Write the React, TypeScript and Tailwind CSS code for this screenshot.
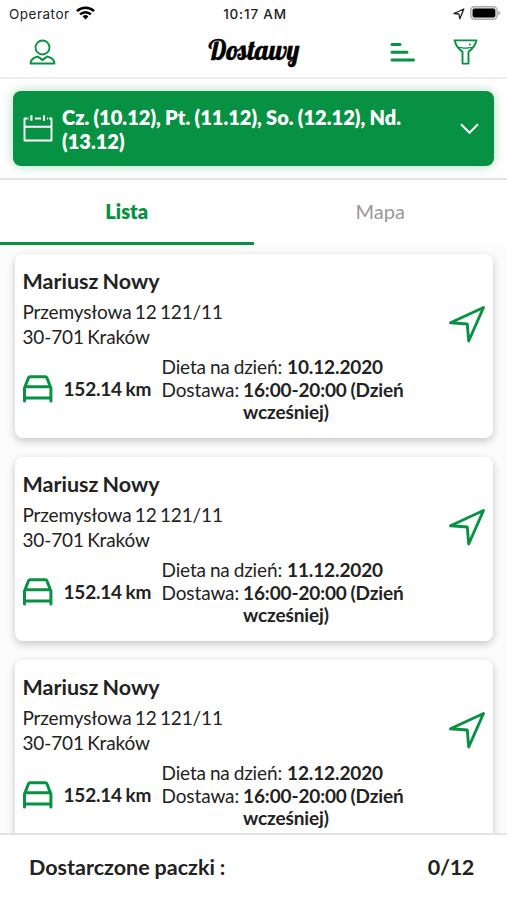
import { type ReactNode } from "react";

type Delivery = {
  id: number;
  name: string;
  street: string;
  city: string;
  distance: string;
  date: string;
};

const deliveries: Delivery[] = ["10.12.2020", "11.12.2020", "12.12.2020"].map((date, id) => ({
  id,
  name: "Mariusz Nowy",
  street: "Przemysłowa 12 121/11",
  city: "30-701 Kraków",
  distance: "152.14 km",
  date,
}));

function StatusBar() {
  return (
    <div className="grid h-7 shrink-0 grid-cols-[1fr_auto_1fr] items-center pr-1.5 pl-[9px] font-['Inter',sans-serif] text-[13.5px] text-[#222]">
      <div className="flex items-center gap-1.5">
        <span className="tracking-[0.5px]">Operator</span>
        <svg className="-mt-0.5" width="19" height="14" viewBox="0 0 19 14" fill="none" stroke="#000" strokeWidth="2.5">
          <path d="M1 5.1a12.3 12.3 0 0 1 17 0" />
          <path d="M4.1 8.4a7.8 7.8 0 0 1 10.8 0" />
          <path d="M9.5 13.4 6.6 10.5a4.2 4.2 0 0 1 5.8 0Z" fill="#000" stroke="none" />
        </svg>
      </div>
      <div className="text-center font-medium tracking-[0.8px]">10:17 AM</div>
      <div className="flex items-center justify-end gap-[5px]">
        <svg width="12" height="12" viewBox="0 0 12 12" fill="none" stroke="#222" strokeWidth="1.3" strokeLinejoin="round">
          <path d="M1 5.5 10.8 1 6.8 10.8 5.9 6Z" />
        </svg>
        <svg className="-mt-0.5" width="31" height="14" viewBox="0 0 31 14">
          <rect x="0.7" y="0.7" width="26.5" height="12.6" rx="3.6" fill="#ddd" stroke="#aaa" strokeWidth="1.2" />
          <rect x="2.6" y="2.6" width="22.7" height="8.8" rx="2" fill="#000" />
          <path d="M28.3 4.7c1.5.6 2 1.4 2 2.3s-.5 1.7-2 2.3Z" fill="#aaa" />
        </svg>
      </div>
    </div>
  );
}

function Header() {
  return (
    <header className="grid h-[51px] shrink-0 grid-cols-[1fr_auto_1fr] items-center border-b-2 border-[#eee] pr-7 pl-[29px]">
      <svg className="-mt-0.5" width="27" height="26" viewBox="0 0 27 26" fill="none" stroke="#079243" strokeWidth="1.8" strokeLinejoin="round">
        <circle cx="13.5" cy="8.5" r="7" />
        <path d="M8.8 17.5C4.5 18.5 1.8 20.8 1.5 24.5h24c-.3-3.7-3-6-7.3-7l-4.7 3.6Z" />
        <path d="m10 18.5 3.5 2.2 3.5-2.2" />
      </svg>
      <h1 className="-mt-1 text-center font-['Lobster','Liberation_Serif',serif] text-[27px] leading-none text-black [-webkit-text-stroke:0.4px_black]">
        Dostawy
      </h1>
      <div className="-mt-0.5 flex items-center justify-end gap-[37px]">
        <svg width="26" height="24" viewBox="0 0 26 24" fill="none" stroke="#079243" strokeWidth="3" strokeLinecap="round">
          <path d="M2 4.5h8M2 12.3h15M2 20h21.5" />
        </svg>
        <svg width="26" height="26" viewBox="0 0 26 26" fill="none" stroke="#079243" strokeWidth="1.9" strokeLinejoin="round">
          <path d="M.7 1.4h23.6M1.9 1.6c.4 4 3.4 8 7.6 11.2v11.8h6V12.8c4.2-3.2 7.2-7.2 7.6-11.2" />
          <path d="M5.3 8.7c2.5-.9 4.4.7 7.2.5 2.4-.1 4-.9 6.6-.5" strokeWidth="1.3" />
          <circle cx="16.8" cy="5.5" r="1" fill="#079243" stroke="none" />
        </svg>
      </div>
    </header>
  );
}

function DatePicker() {
  return (
    <div className="h-[101px] shrink-0 border-b-2 border-[#e4e4e4] px-[13px] pt-3">
      <button className="flex h-[75px] w-full items-center rounded-lg bg-[#079243] pr-[15px] pl-2.5 text-left text-white shadow-[0_0_12px_#07924355]">
        <svg className="shrink-0" width="30" height="28" viewBox="0 0 30 28" fill="none" stroke="currentColor" strokeWidth="1.9" strokeLinejoin="round">
          <path d="M4 3.5H1.5v22h27v-22H26M12 3.5h6M1.5 11.7h27" />
          <path d="M8.4.3v5.4M21 .3v5.4M4.5 3.5h1M24 3.5h1" strokeWidth="2.1" />
        </svg>
        <span className="ml-[9px] w-[350px] text-[20px] leading-6 font-extrabold tracking-[0.03px] [word-spacing:-0.5px]">
          Cz. (10.12), Pt. (11.12), So. (12.12), Nd. (13.12)
        </span>
        <svg className="ml-auto shrink-0" width="19" height="12" viewBox="0 0 19 12" fill="none" stroke="currentColor" strokeWidth="2.1">
          <path d="m1 1.2 8.5 8.6L18 1.2" />
        </svg>
      </button>
    </div>
  );
}

function Tab({ active, children }: { active?: boolean; children: ReactNode }) {
  return (
    <button
      className={
        active
          ? "border-b-3 border-[#079243] text-[20px] font-extrabold text-[#079243]"
          : "border-b-3 border-transparent text-[20px] text-[#999]"
      }
    >
      {children}
    </button>
  );
}

function DeliveryCard({ delivery }: { delivery: Delivery }) {
  return (
    <article className="flex h-[184px] shrink-0 flex-col rounded-lg bg-white px-2 pt-[13px] shadow-[0_3px_9px_#00000038]">
      <div className="flex h-[89px] justify-between">
        <div>
          <h2 className="text-[21.5px] leading-7 font-bold [word-spacing:-1px]">{delivery.name}</h2>
          <div className="mt-1 text-[19px] leading-[25px] tracking-[-0.15px] [word-spacing:-1.3px]">
            <p>{delivery.street}</p>
            <p>{delivery.city}</p>
          </div>
        </div>
        <svg className="mt-[38px]" width="37" height="38" viewBox="0 0 37 38" fill="none" stroke="#079243" strokeWidth="2.9" strokeLinejoin="round">
          <path d="M2.5 17.8 35.5 2.5 20.7 36 19.3 19Z" />
        </svg>
      </div>
      <div className="flex text-[19px] leading-[22.7px] tracking-[-0.12px] [word-spacing:-0.8px]">
        <div className="flex h-[66px] w-[139px] shrink-0 items-center">
          <svg className="shrink-0" width="30" height="28" viewBox="0 0 30 28" fill="none" stroke="#079243" strokeWidth="3" strokeLinejoin="round" strokeLinecap="round">
            <path d="M1.5 26V13L5.5 2.7Q5.9 1.7 7 1.7h15.4q1.1 0 1.5 1L27.9 13v13M2.2 11.8h25M1.7 23h26" />
          </svg>
          <span className="ml-[11px] font-bold tracking-[-0.2px] whitespace-nowrap">{delivery.distance}</span>
        </div>
        <div className="shrink-0 whitespace-nowrap">
          <p>
            Dieta na dzień: <b className="ml-px font-bold">{delivery.date}</b>
          </p>
          <div className="flex">
            <span className="mr-1">Dostawa:</span>
            <b className="font-bold">
              16:00-20:00 (Dzień
              <br />
              wcześniej)
            </b>
          </div>
        </div>
      </div>
    </article>
  );
}

export default function App() {
  return (
    <div className="flex h-[900px] w-[507px] flex-col overflow-hidden bg-white font-['Lato',sans-serif] text-[#222]">
      <StatusBar />
      <Header />
      <DatePicker />
      <nav className="grid h-[65px] shrink-0 grid-cols-2">
        <Tab active>Lista</Tab>
        <Tab>Mapa</Tab>
      </nav>
      <main className="flex min-h-0 flex-1 flex-col gap-[19px] overflow-hidden bg-[#fcfcfc] px-[14.5px] pt-[9px]">
        {deliveries.map((delivery) => (
          <DeliveryCard key={delivery.id} delivery={delivery} />
        ))}
      </main>
      <footer className="flex h-[67px] shrink-0 items-center justify-between border-t-2 border-[#e2e2e2] pr-[33px] pl-[29px] text-[21.5px] font-bold [word-spacing:-0.3px]">
        <span>Dostarczone paczki :</span>
        <span className="tracking-[-0.3px]">0/12</span>
      </footer>
    </div>
  );
}
